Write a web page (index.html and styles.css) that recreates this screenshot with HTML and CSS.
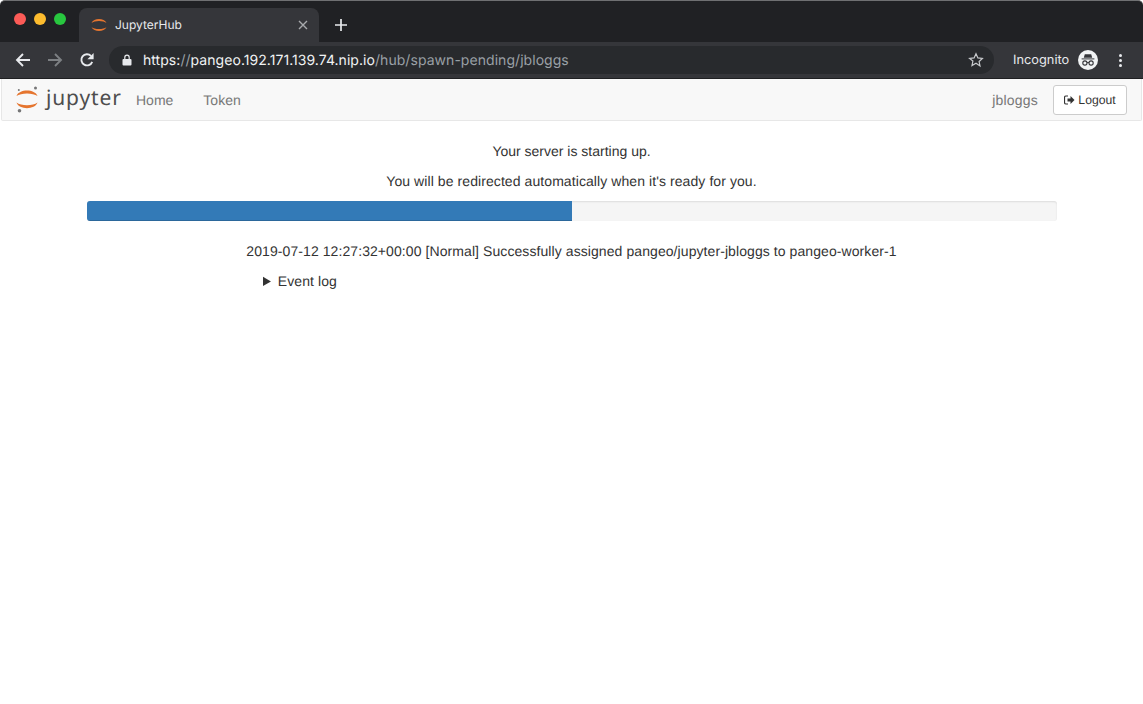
FILE: index.html
```html
<!DOCTYPE html>
<html lang="en">
<head>
<meta charset="utf-8">
<title>JupyterHub</title>
<link rel="stylesheet" href="styles.css">
</head>
<body>
<div class="browser">
  <div class="titlebar">
    <div class="lights"><span class="light red"></span><span class="light yellow"></span><span class="light green"></span></div>
    <div class="tab">
      <svg class="favicon" width="16" height="16" viewBox="0 0 16 16"><path d="M.5 6C2.500 .6 13.500 .6 15.500 6 12.500 3.300 3.500 3.300 .5 6Z" fill="#e5752f"/><path d="M.5 10C2.500 15.400 13.500 15.400 15.500 10 12.500 12.700 3.500 12.700 .5 10Z" fill="#e5752f"/></svg>
      <span class="tab-title">JupyterHub</span>
      <svg class="tab-close" width="10" height="10" viewBox="0 0 10 10"><path d="M1 1L9 9M9 1L1 9" stroke="#a8aaad" stroke-width="1.4" fill="none"/></svg>
    </div>
    <svg class="newtab" width="14" height="14" viewBox="0 0 14 14"><path d="M7 1V13M1 7H13" stroke="#e8eaed" stroke-width="1.7" fill="none"/></svg>
  </div>
  <div class="toolbar">
    <svg class="nav nav-back" width="16" height="16" viewBox="0 0 16 16"><path d="M15 8H2M8 2L2 8l6 6" stroke="#e8eaed" stroke-width="1.9" fill="none"/></svg>
    <svg class="nav nav-fwd" width="16" height="16" viewBox="0 0 16 16"><path d="M1 8H14M8 2l6 6-6 6" stroke="#7d8083" stroke-width="1.9" fill="none"/></svg>
    <svg class="nav nav-reload" width="16" height="16" viewBox="0 0 16 16"><path d="M13.2 9.8A5.6 5.6 0 1 1 12 3.900" stroke="#e8eaed" stroke-width="1.9" fill="none"/><path d="M14.600 1v6.200H8.400Z" fill="#e8eaed"/></svg>
    <div class="urlbar">
      <svg class="lock" width="10" height="12" viewBox="0 0 10 12"><path d="M1.500 5h7a1 1 0 0 1 1 1v4.500a1 1 0 0 1-1 1h-7a1 1 0 0 1-1-1V6a1 1 0 0 1 1-1Z" fill="#e8eaed"/><path d="M2.800 5.500V3.400a2.200 2.200 0 0 1 4.400 0v2.100" stroke="#e8eaed" stroke-width="1.200" fill="none"/></svg>
      <span class="url"><span class="url-host">https:</span><span class="url-dim">//</span><span class="url-host">pangeo.192.171.139.74.nip.io</span><span class="url-dim">/hub/spawn-pending/jbloggs</span></span>
      <svg class="star" width="16" height="16" viewBox="0 0 16 16"><path d="M8 1.800l1.900 4.100 4.500.5-3.300 3.100.9 4.500L8 11.300l-4 2.200.9-4.500L1.600 6.400l4.500-.5Z" stroke="#c9cbce" stroke-width="1.200" fill="none"/></svg>
    </div>
    <span class="incognito-label">Incognito</span>
    <svg class="incognito-icon" width="20" height="20" viewBox="0 0 20 20"><circle cx="10" cy="10" r="10" fill="#f1f3f4"/><path d="M6.800 4.200h6.400l1 3.600H5.800Z" fill="#35363a"/><path d="M3.600 8.400h12.800v1H3.600Z" fill="#35363a"/><circle cx="6.900" cy="13" r="2.100" fill="none" stroke="#35363a" stroke-width="1.100"/><circle cx="13.100" cy="13" r="2.100" fill="none" stroke="#35363a" stroke-width="1.100"/><path d="M9 12.600h2" stroke="#35363a" stroke-width="1"/></svg>
    <div class="menu-dots"><span></span><span></span><span></span></div>
  </div>
</div>
<nav class="navbar">
  <div class="brand">
    <svg class="logo" width="24" height="30" viewBox="0 0 24 30"><circle cx="19.500" cy="3" r="1.500" fill="#767677"/><circle cx="2.800" cy="5" r="1" fill="#767677"/><circle cx="3.500" cy="25.700" r="1.800" fill="#767677"/><path d="M.5 11C3 3.600 19 3.600 21.500 11 17 7.500 5 7.500 .5 11Z" fill="#e5752f"/><path d="M.5 17.500C3 25 19 25 21.500 17.500 17 21 5 21 .5 17.500Z" fill="#e5752f"/></svg>
    <span class="wordmark">jupyter</span>
  </div>
  <a class="nav-link">Home</a>
  <a class="nav-link">Token</a>
  <span class="spacer"></span>
  <span class="user">jbloggs</span>
  <a class="logout"><svg class="logout-icon" width="11" height="10" viewBox="0 0 11 10"><path d="M4 1H2a1.500 1.500 0 0 0-1.500 1.500v5A1.500 1.500 0 0 0 2 9h2" stroke="#333" stroke-width="1.200" fill="none"/><path d="M3.500 3.500h3V1l4 4-4 4V6.500h-3Z" fill="#333"/></svg>Logout</a>
</nav>
<main class="content">
  <p class="msg">Your server is starting up.</p>
  <p class="msg msg-wide">You will be redirected automatically when it's ready for you.</p>
  <div class="progress"><div class="progress-bar" style="width: 50%"></div></div>
  <p class="msg msg-status">2019-07-12 12:27:32+00:00 [Normal] Successfully assigned pangeo/jupyter-jbloggs to pangeo-worker-1</p>
  <details class="log"><summary>Event log</summary></details>
</main>
</body>
</html>
```
FILE: styles.css
```css
* { box-sizing: border-box; }
html, body { margin: 0; height: 100%; overflow: hidden; background: #fff; }
body { font-family: "Liberation Sans", Arial, sans-serif; font-size: 14px; line-height: 20px; color: #333; text-rendering: geometricPrecision; }

.browser { background: #202124; border-radius: 5px 5px 0 0; border-top: 1px solid #6f7072; font-family: Inter, "Liberation Sans", sans-serif; }
.titlebar { height: 41px; display: flex; align-items: flex-end; }
.lights { display: flex; gap: 8px; width: 79px; padding: 0 0 17px 14px; align-self: flex-end; }
.light { width: 12px; height: 12px; border-radius: 50%; }
.red { background: #fc5b57; }
.yellow { background: #fdbc2e; }
.green { background: #28c73f; }
.tab { width: 240px; height: 34px; background: #35363a; border-radius: 8px 8px 0 0; display: flex; align-items: center; padding: 0 11px 0 12px; }
.favicon { flex: none; }
.tab-title { margin-left: 8px; flex: 1; font-size: 12px; color: #e8eaed; }
.newtab { margin: 0 0 10px 15px; }

.toolbar { height: 37px; background: #35363a; display: flex; align-items: center; border-bottom: 1px solid #1f2022; padding-left: 15px; }
.nav { flex: none; }
.nav-fwd { margin-left: 16px; }
.nav-reload { margin-left: 16px; }
.urlbar { width: 885px; height: 28px; margin-left: 14px; background: #282a2d; border-radius: 14px; display: flex; align-items: center; padding: 0 10px 0 13px; }
.lock { flex: none; }
.url { margin-left: 11px; padding-top: 1px; flex: 1; font-size: 14px; white-space: nowrap; letter-spacing: .05px; }
.url-dim { color: #9aa0a6; }
.url-host { color: #f1f3f4; }
.incognito-label { margin-left: 19px; padding-top: 2px; font-size: 12.800px; color: #e8eaed; }
.incognito-icon { margin-left: 9px; flex: none; }
.menu-dots { margin-left: 21px; display: flex; flex-direction: column; gap: 2px; }
.menu-dots span { width: 3px; height: 3px; border-radius: 50%; background: #e8eaed; }

.navbar { height: 42px; margin: 0 1px; background: #f8f8f8; border: 1px solid #e7e7e7; border-top: 0; display: flex; align-items: center; color: #777; border-radius: 0 0 2px 2px; }
.brand { display: flex; align-items: center; margin-left: 14px; width: 120px; }
.logo { flex: none; }
.wordmark { margin-left: 6px; font-family: "Noto Sans", sans-serif; font-size: 21px; letter-spacing: .85px; color: #4e4e4e; line-height: 28px; margin-top: -3px; }
.nav-link { color: #777; margin-right: 30px; }
.spacer { flex: 1; }
.user { margin-right: 15px; letter-spacing: .2px; }
.logout { width: 74px; height: 30px; background: #fff; border: 1px solid #ccc; border-radius: 3px; display: flex; align-items: center; justify-content: center; font-size: 12.200px; color: #333; margin-right: 14px; }
.logout-icon { margin-right: 3px; }

.content { padding-top: 20px; }
.msg { margin: 0 0 10px; text-align: center; }
.msg-wide { letter-spacing: .08px; }
.msg-status { letter-spacing: .08px; }
.progress { width: 970px; height: 20px; margin: 0 auto 20px; background: #f5f5f5; border-radius: 3px; overflow: hidden; box-shadow: inset 0 1px 2px rgba(0,0,0,.1); }
.progress-bar { height: 100%; background: #337ab7; box-shadow: inset 0 -1px 0 rgba(0,0,0,.15); }
.log { width: 617px; margin: 0 auto; letter-spacing: .08px; }
.log summary { cursor: pointer; }
```
